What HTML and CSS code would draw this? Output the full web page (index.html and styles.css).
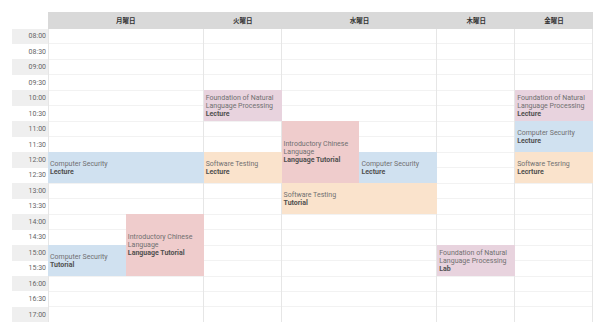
FILE: index.html
```html
<!DOCTYPE html>
<html>
<head>
<meta charset="utf-8">
<link rel="stylesheet" href="styles.css">
</head>
<body>
<div class="timetable">
  <div class="corner"></div>
  <div class="day-head mon">月曜日</div>
  <div class="day-head tue">火曜日</div>
  <div class="day-head wed">水曜日</div>
  <div class="day-head thu">木曜日</div>
  <div class="day-head fri">金曜日</div>

  <div class="time hour">08:00</div>
  <div class="time">08:30</div>
  <div class="time hour">09:00</div>
  <div class="time">09:30</div>
  <div class="time hour">10:00</div>
  <div class="time">10:30</div>
  <div class="time hour">11:00</div>
  <div class="time">11:30</div>
  <div class="time hour">12:00</div>
  <div class="time">12:30</div>
  <div class="time hour">13:00</div>
  <div class="time">13:30</div>
  <div class="time hour">14:00</div>
  <div class="time">14:30</div>
  <div class="time hour">15:00</div>
  <div class="time">15:30</div>
  <div class="time hour">16:00</div>
  <div class="time">16:30</div>
  <div class="time hour">17:00</div>

  <div class="day-col mon"></div>
  <div class="day-col tue"></div>
  <div class="day-col wed"></div>
  <div class="day-col thu"></div>
  <div class="day-col fri"></div>

  <div class="event nlp r10-11 c-tue"><span class="title">Foundation of Natural Language Processing</span><span class="kind">Lecture</span></div>
  <div class="event nlp r10-11 c-fri"><span class="title">Foundation of Natural Language Processing</span><span class="kind">Lecture</span></div>
  <div class="event cs r11-12 c-fri"><span class="title">Computer Security</span><span class="kind">Lecture</span></div>
  <div class="event st r12-13 c-fri"><span class="title">Software Tesring</span><span class="kind">Lecrture</span></div>
  <div class="event cs r12-13 c-mon"><span class="title">Computer Security</span><span class="kind">Lecture</span></div>
  <div class="event st r12-13 c-tue"><span class="title">Software Testing</span><span class="kind">Lecture</span></div>
  <div class="event chn r11-13 c-wed1"><span class="title">Introductory Chinese Language</span><span class="kind">Language Tutorial</span></div>
  <div class="event cs r12-13 c-wed2"><span class="title">Computer Security</span><span class="kind">Lecture</span></div>
  <div class="event st r13-14 c-wed"><span class="title">Software Testing</span><span class="kind">Tutorial</span></div>
  <div class="event chn r14-16 c-mon2"><span class="title">Introductory Chinese Language</span><span class="kind">Language Tutorial</span></div>
  <div class="event cs r15-16 c-mon1"><span class="title">Computer Security</span><span class="kind">Tutorial</span></div>
  <div class="event nlp r15-16 c-thu"><span class="title">Foundation of Natural Language Processing</span><span class="kind">Lab</span></div>
</div>
</body>
</html>
```

FILE: styles.css
```css
html, body {
  margin: 0;
  padding: 0;
  background: #ffffff;
}
body {
  padding: 12px;
  font-family: Roboto, "Noto Sans CJK JP", sans-serif;
}
.timetable {
  display: grid;
  width: 581px;
  grid-template-columns: 36px repeat(7, 1fr);
  grid-template-rows: 16.5px repeat(19, 15.47px);
}
.corner {
  grid-column: 1;
  grid-row: 1;
}
.day-head {
  grid-row: 1;
  background: #d9d9d9;
  color: #333;
  font-weight: bold;
  font-size: 6.5px;
  display: flex;
  align-items: center;
  justify-content: center;
  font-family: "Noto Sans CJK JP", sans-serif;
}
.day-head.mon { grid-column: 2 / 4; }
.day-head.tue { grid-column: 4 / 5; }
.day-head.wed { grid-column: 5 / 7; }
.day-head.thu { grid-column: 7 / 8; }
.day-head.fri { grid-column: 8 / 9; }

.time {
  grid-column: 1;
  font-size: 7px;
  color: #666;
  display: flex;
  align-items: center;
  justify-content: flex-end;
  padding-right: 2px;
}
.time.hour {
  background: #efefef;
}

.day-col {
  grid-row: 2 / 21;
  border-right: 1px solid #e6e6e6;
  background-image: repeating-linear-gradient(to bottom, transparent 0, transparent 14.47px, #f2f2f2 14.47px, #f2f2f2 15.47px);
}
.day-col.mon { grid-column: 2 / 4; border-left: 1px solid #e6e6e6; }
.day-col.tue { grid-column: 4 / 5; }
.day-col.wed { grid-column: 5 / 7; }
.day-col.thu { grid-column: 7 / 8; }
.day-col.fri { grid-column: 8 / 9; }

.event {
  display: flex;
  flex-direction: column;
  justify-content: center;
  padding: 0 2px;
  font-size: 7px;
  line-height: 8px;
  color: #707070;
  overflow: hidden;
}
.event .kind {
  font-weight: bold;
  color: #505050;
}
.nlp { background: #e8d3de; }
.cs { background: #d0e1f0; }
.st { background: #fae3cc; }
.chn { background: #efcccc; }

.r10-11 { grid-row: 6 / 8; }
.r11-12 { grid-row: 8 / 10; }
.r12-13 { grid-row: 10 / 12; }
.r11-13 { grid-row: 8 / 12; }
.r13-14 { grid-row: 12 / 14; }
.r14-16 { grid-row: 14 / 18; }
.r15-16 { grid-row: 16 / 18; }

.c-mon { grid-column: 2 / 4; }
.c-mon1 { grid-column: 2 / 3; }
.c-mon2 { grid-column: 3 / 4; }
.c-tue { grid-column: 4 / 5; }
.c-wed { grid-column: 5 / 7; }
.c-wed1 { grid-column: 5 / 6; }
.c-wed2 { grid-column: 6 / 7; }
.c-thu { grid-column: 7 / 8; }
.c-fri { grid-column: 8 / 9; }
```
